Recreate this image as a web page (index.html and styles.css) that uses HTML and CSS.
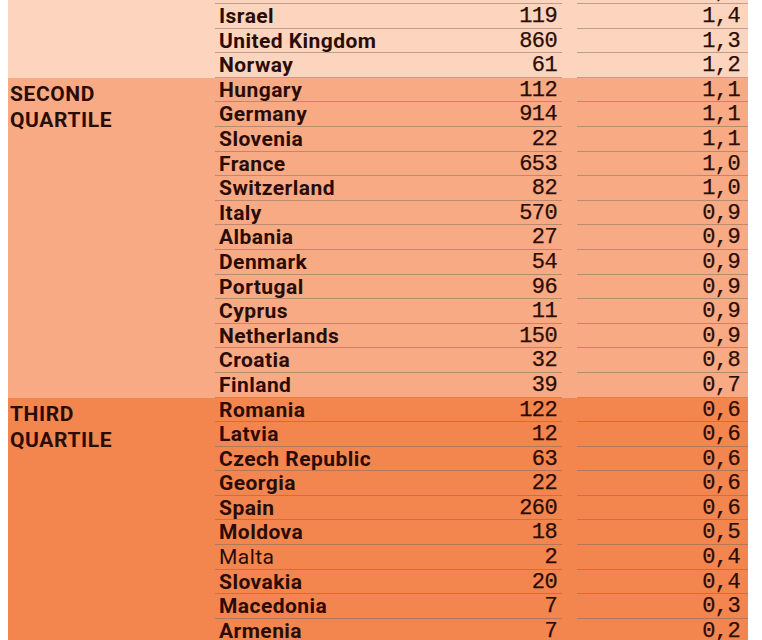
FILE: index.html
```html
<!DOCTYPE html>
<html>
<head>
<meta charset="utf-8">
<link rel="stylesheet" href="styles.css">
</head>
<body>
<div class="table">
  <section class="quartile q1">
    <div class="label"></div>
    <div class="rows">
      <div class="row"><span class="country">Iceland</span><span class="num">10</span><span class="gap"></span><span class="val">1,5</span></div>
      <div class="row"><span class="country">Israel</span><span class="num">119</span><span class="gap"></span><span class="val">1,4</span></div>
      <div class="row"><span class="country">United Kingdom</span><span class="num">860</span><span class="gap"></span><span class="val">1,3</span></div>
      <div class="row"><span class="country">Norway</span><span class="num">61</span><span class="gap"></span><span class="val">1,2</span></div>
    </div>
  </section>
  <section class="quartile q2">
    <div class="label">SECOND<br>QUARTILE</div>
    <div class="rows">
      <div class="row"><span class="country">Hungary</span><span class="num">112</span><span class="gap"></span><span class="val">1,1</span></div>
      <div class="row"><span class="country">Germany</span><span class="num">914</span><span class="gap"></span><span class="val">1,1</span></div>
      <div class="row"><span class="country">Slovenia</span><span class="num">22</span><span class="gap"></span><span class="val">1,1</span></div>
      <div class="row"><span class="country">France</span><span class="num">653</span><span class="gap"></span><span class="val">1,0</span></div>
      <div class="row"><span class="country">Switzerland</span><span class="num">82</span><span class="gap"></span><span class="val">1,0</span></div>
      <div class="row"><span class="country">Italy</span><span class="num">570</span><span class="gap"></span><span class="val">0,9</span></div>
      <div class="row"><span class="country">Albania</span><span class="num">27</span><span class="gap"></span><span class="val">0,9</span></div>
      <div class="row"><span class="country">Denmark</span><span class="num">54</span><span class="gap"></span><span class="val">0,9</span></div>
      <div class="row"><span class="country">Portugal</span><span class="num">96</span><span class="gap"></span><span class="val">0,9</span></div>
      <div class="row"><span class="country">Cyprus</span><span class="num">11</span><span class="gap"></span><span class="val">0,9</span></div>
      <div class="row"><span class="country">Netherlands</span><span class="num">150</span><span class="gap"></span><span class="val">0,9</span></div>
      <div class="row"><span class="country">Croatia</span><span class="num">32</span><span class="gap"></span><span class="val">0,8</span></div>
      <div class="row"><span class="country">Finland</span><span class="num">39</span><span class="gap"></span><span class="val">0,7</span></div>
    </div>
  </section>
  <section class="quartile q3">
    <div class="label">THIRD<br>QUARTILE</div>
    <div class="rows">
      <div class="row"><span class="country">Romania</span><span class="num">122</span><span class="gap"></span><span class="val">0,6</span></div>
      <div class="row"><span class="country">Latvia</span><span class="num">12</span><span class="gap"></span><span class="val">0,6</span></div>
      <div class="row"><span class="country">Czech Republic</span><span class="num">63</span><span class="gap"></span><span class="val">0,6</span></div>
      <div class="row"><span class="country">Georgia</span><span class="num">22</span><span class="gap"></span><span class="val">0,6</span></div>
      <div class="row"><span class="country">Spain</span><span class="num">260</span><span class="gap"></span><span class="val">0,6</span></div>
      <div class="row"><span class="country">Moldova</span><span class="num">18</span><span class="gap"></span><span class="val">0,5</span></div>
      <div class="row"><span class="country light">Malta</span><span class="num">2</span><span class="gap"></span><span class="val">0,4</span></div>
      <div class="row"><span class="country">Slovakia</span><span class="num">20</span><span class="gap"></span><span class="val">0,4</span></div>
      <div class="row"><span class="country">Macedonia</span><span class="num">7</span><span class="gap"></span><span class="val">0,3</span></div>
      <div class="row"><span class="country">Armenia</span><span class="num">7</span><span class="gap"></span><span class="val">0,2</span></div>
    </div>
  </section>
</div>
</body>
</html>
```
FILE: styles.css
```css
html, body {
  margin: 0;
  padding: 0;
  background: #ffffff;
  overflow: hidden;
}
body {
  padding: 0 14px 0 8px;
}
.table {
  margin-top: -20.6px;
  width: 740px;
  color: #2a0c06;
}
.quartile {
  display: flex;
}
.q1 { background: #fdd4bd; }
.q2 { background: #f7aa84; }
.q3 { background: #f3854f; }
.label {
  width: 207px;
  flex: none;
  box-sizing: border-box;
  padding-left: 2px;
  padding-top: 3px;
  font-family: Roboto, "Liberation Sans", sans-serif;
  font-weight: 700;
  font-size: 21px;
  letter-spacing: 0.6px;
  line-height: 26px;
}
.rows {
  flex: 1;
}
.row {
  display: grid;
  grid-template-columns: 200px 147px 15px 171px;
  height: 24.6px;
  line-height: 24px;
}
.country, .num, .val {
  border-bottom: 1px solid rgba(120, 105, 95, 0.5);
  box-sizing: border-box;
  height: 24.6px;
}
.country {
  padding-left: 4px;
  font-family: Roboto, "Liberation Sans", sans-serif;
  font-weight: 700;
  font-size: 21px;
  white-space: nowrap;
  letter-spacing: 0.45px;
}
.country.light {
  font-weight: 400;
}
.num, .val {
  text-align: right;
  font-family: "Liberation Mono", "DejaVu Sans Mono", monospace;
  font-size: 22px;
  letter-spacing: -0.6px;
  -webkit-text-stroke: 0.25px #2a0c06;
  line-height: 26.5px;
  white-space: nowrap;
  overflow: hidden;
}
.num { padding-right: 5px; }
.val { padding-right: 8px; }
```
